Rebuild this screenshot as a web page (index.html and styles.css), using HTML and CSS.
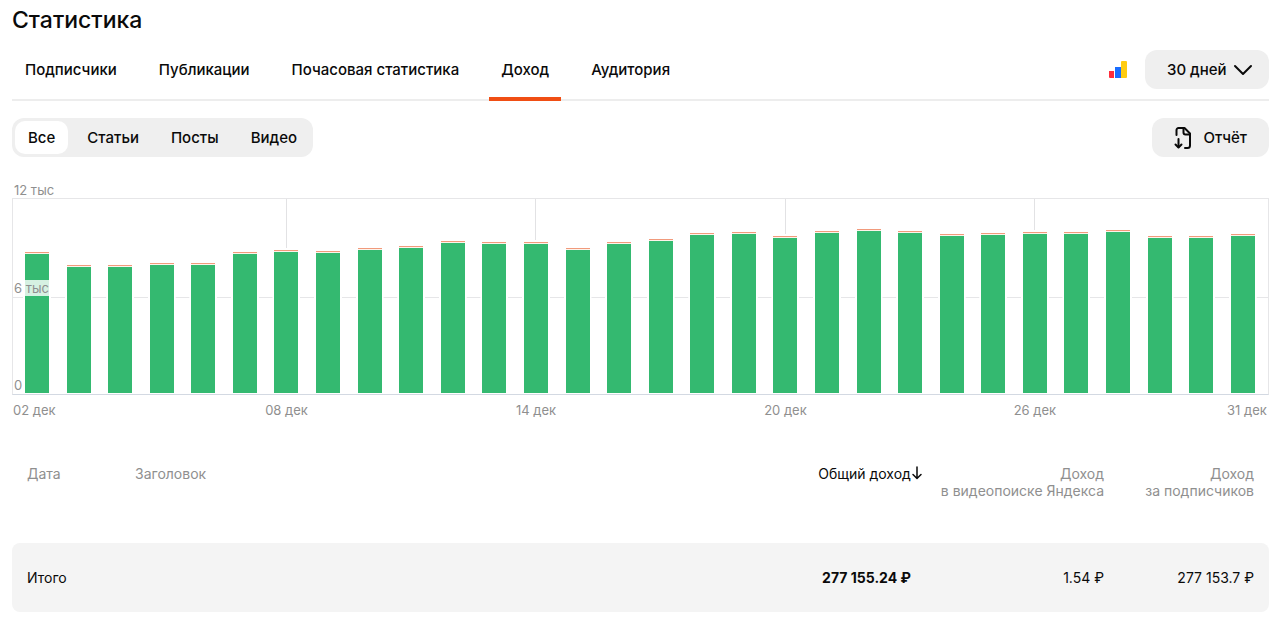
FILE: index.html
```html
<!DOCTYPE html>
<html lang="ru">
<head>
<meta charset="utf-8">
<meta name="viewport" content="width=device-width, initial-scale=1">
<title>Статистика</title>
<link rel="stylesheet" href="styles.css">
</head>
<body>
<main class="page">
  <h1 class="title">Статистика</h1>

  <div class="topbar">
    <nav class="tabs" aria-label="Разделы статистики">
      <a class="tab" href="#subscribers">Подписчики</a>
      <a class="tab" href="#publications">Публикации</a>
      <a class="tab" href="#hourly">Почасовая статистика</a>
      <a class="tab tab-active" href="#income" aria-current="page">Доход</a>
      <a class="tab" href="#audience">Аудитория</a>
    </nav>
    <div class="period">
      <a class="metrika" href="#metrika" aria-label="Метрика">
        <svg width="20" height="19" viewBox="0 0 20 19" aria-hidden="true">
          <path fill="#ff2d3c" d="M1 11h5v7H2a1 1 0 0 1-1-1z"/>
          <path fill="#1a6dff" d="M7 7h6v11H7z"/>
          <path fill="#ffcc12" d="M13 2a1 1 0 0 1 1-1h4a1 1 0 0 1 1 1v15a1 1 0 0 1-1 1h-5z"/>
        </svg>
      </a>
      <div class="select-wrap">
        <select class="select" aria-label="Период">
          <option>30 дней</option>
        </select>
        <svg class="chevron" width="20" height="12" viewBox="0 0 20 12" fill="none" stroke="#0a0a0a" stroke-width="2" stroke-linecap="round" stroke-linejoin="round" aria-hidden="true"><path d="M2 2l8 8 8-8"/></svg>
      </div>
    </div>
  </div>

  <div class="toolbar">
    <div class="segments" role="group" aria-label="Тип публикаций">
      <button class="segment segment-active" type="button" aria-pressed="true">Все</button>
      <button class="segment" type="button" aria-pressed="false">Статьи</button>
      <button class="segment" type="button" aria-pressed="false">Посты</button>
      <button class="segment" type="button" aria-pressed="false">Видео</button>
    </div>
    <button class="report" type="button">
      <svg width="18" height="24" viewBox="0 0 18 24" fill="none" stroke="#0a0a0a" stroke-width="2" stroke-linecap="round" stroke-linejoin="round" aria-hidden="true">
        <path d="M2.5 9V4a2 2 0 0 1 2-2h6L16 7.500v12a2.500 2.500 0 0 1-2.500 2.500H11"/>
        <path d="M9.500 2.500v4a2 2 0 0 0 2 2h4"/>
        <path d="M4.500 13v8"/>
        <path d="M1.500 18.500l3 3 3-3"/>
      </svg>
      Отчёт
    </button>
  </div>

  <section class="chart" aria-label="График дохода">
    <div class="chart-max">12 тыс</div>
    <div class="plot">
      <span class="plot-label plot-mid">6 тыс</span>
      <span class="plot-label plot-zero">0</span>
      <div class="slot"><div class="bar" style="height:141px"></div></div>
      <div class="slot"><div class="bar" style="height:128px"></div></div>
      <div class="slot"><div class="bar" style="height:128px"></div></div>
      <div class="slot"><div class="bar" style="height:130px"></div></div>
      <div class="slot"><div class="bar" style="height:130px"></div></div>
      <div class="slot"><div class="bar" style="height:141px"></div></div>
      <div class="slot slot-tick"><div class="bar" style="height:143px"></div></div>
      <div class="slot"><div class="bar" style="height:142px"></div></div>
      <div class="slot"><div class="bar" style="height:145px"></div></div>
      <div class="slot"><div class="bar" style="height:147px"></div></div>
      <div class="slot"><div class="bar" style="height:152px"></div></div>
      <div class="slot"><div class="bar" style="height:151px"></div></div>
      <div class="slot slot-tick"><div class="bar" style="height:151px"></div></div>
      <div class="slot"><div class="bar" style="height:145px"></div></div>
      <div class="slot"><div class="bar" style="height:151px"></div></div>
      <div class="slot"><div class="bar" style="height:154px"></div></div>
      <div class="slot"><div class="bar" style="height:160px"></div></div>
      <div class="slot"><div class="bar" style="height:161px"></div></div>
      <div class="slot slot-tick"><div class="bar" style="height:157px"></div></div>
      <div class="slot"><div class="bar" style="height:162px"></div></div>
      <div class="slot"><div class="bar" style="height:164px"></div></div>
      <div class="slot"><div class="bar" style="height:162px"></div></div>
      <div class="slot"><div class="bar" style="height:159px"></div></div>
      <div class="slot"><div class="bar" style="height:160px"></div></div>
      <div class="slot slot-tick"><div class="bar" style="height:161px"></div></div>
      <div class="slot"><div class="bar" style="height:161px"></div></div>
      <div class="slot"><div class="bar" style="height:163px"></div></div>
      <div class="slot"><div class="bar" style="height:157px"></div></div>
      <div class="slot"><div class="bar" style="height:157px"></div></div>
      <div class="slot"><div class="bar" style="height:159px"></div></div>
    </div>
    <div class="dates">
      <span class="date date-first">02 дек</span>
      <span class="date" style="grid-column:7">08 дек</span>
      <span class="date" style="grid-column:13">14 дек</span>
      <span class="date" style="grid-column:19">20 дек</span>
      <span class="date" style="grid-column:25">26 дек</span>
      <span class="date date-last">31 дек</span>
    </div>
  </section>

  <table class="table">
    <thead>
      <tr>
        <th class="col-date" scope="col">Дата</th>
        <th scope="col">Заголовок</th>
        <th class="num" scope="col" aria-sort="descending">
          <button class="sort" type="button">Общий доход<svg class="sort-arrow" width="12" height="14" viewBox="0 0 12 14" fill="none" stroke="#0a0a0a" stroke-width="1.500" stroke-linecap="round" stroke-linejoin="round" aria-hidden="true"><path d="M6 1v11M2 8.500l4 4 4-4"/></svg></button>
        </th>
        <th class="num col-video" scope="col">Доход<br>в видеопоиске Яндекса</th>
        <th class="num col-subs" scope="col">Доход<br>за подписчиков</th>
      </tr>
    </thead>
    <tbody>
      <tr class="total">
        <td colspan="2">Итого</td>
        <td class="num strong">277 155.24 ₽</td>
        <td class="num">1.54 ₽</td>
        <td class="num">277 153.7 ₽</td>
      </tr>
    </tbody>
  </table>
</main>
</body>
</html>
```
FILE: styles.css
```css
* { box-sizing: border-box; }

body {
  margin: 0;
  background: #fff;
  color: #0a0a0a;
  font-family: Inter, "Liberation Sans", sans-serif;
  font-size: 15px;
}

button, select { font: inherit; color: inherit; border: 0; cursor: pointer; }

.page { padding: 6px 11px 8px 12px; }

.title { margin: 0 0 16px; font-size: 23px; line-height: 28px; font-weight: 500; }

.topbar {
  display: flex;
  justify-content: space-between;
  border-bottom: 2px solid #ededed;
}
.tabs { display: flex; gap: 18px; margin-bottom: -2px; padding-left: 1px; }
.tab {
  display: block;
  padding: 10px 12px 17px;
  border-bottom: 4px solid transparent;
  line-height: 20px;
  font-weight: 500;
  color: inherit;
  text-decoration: none;
}
.tab-active { border-bottom-color: #f04e14; }

.period { display: flex; align-items: center; gap: 17px; margin-bottom: 10px; }
.metrika { display: block; height: 19px; }
.metrika svg { display: block; }
.select-wrap { position: relative; }
.select {
  appearance: none;
  display: block;
  height: 39px;
  padding: 0 42px 0 22px;
  border-radius: 12px;
  background: #efefef;
  font-weight: 500;
}
.chevron { position: absolute; right: 16px; top: 14px; pointer-events: none; }

.toolbar {
  display: flex;
  justify-content: space-between;
  margin-top: 17px;
}
.segments {
  display: flex;
  gap: 6px;
  padding: 3px;
  border-radius: 12px;
  background: #efefef;
}
.segment {
  height: 33px;
  padding: 0 13px;
  border-radius: 10px;
  background: transparent;
  font-weight: 500;
}
.segment-active { background: #fff; }
.report {
  display: flex;
  align-items: center;
  gap: 12px;
  height: 39px;
  padding: 0 22px;
  border-radius: 12px;
  background: #efefef;
  font-weight: 500;
}

.chart { margin-top: 25px; color: #8f8f8f; font-size: 13px; line-height: 16px; }
.chart-max { padding-left: 2px; }
.plot {
  position: relative;
  display: flex;
  justify-content: space-between;
  height: 197px;
  padding: 0 13px 1px 12px;
  border: 1px solid #e6e6e8;
  border-bottom-color: #d3d9e2;
  background: linear-gradient(#e6e6e8, #e6e6e8) 0 98px / 100% 1px no-repeat;
}
.slot { display: flex; align-items: flex-end; width: 24px; }
.slot-tick { background: linear-gradient(#e2e2e4, #e2e2e4) center / 1px 100% no-repeat; }
/* The thin orange cap is the second series stacked over the green one. */
.bar {
  width: 100%;
  border-top: 1px solid #f19a7c;
  background: linear-gradient(#fdf3ea 1px, #34b970 1px);
  box-shadow: 0 0 0 2px #fff;
  clip-path: inset(-2px -2px 0);
}
.plot-label { position: absolute; z-index: 1; left: 0; padding: 0 1px; background: rgba(255, 255, 255, .8); }
.plot-mid { top: 81px; }
.plot-zero { bottom: 1px; }

.dates {
  display: grid;
  grid-template-columns: repeat(30, 24px);
  justify-content: space-between;
  margin-top: 7px;
  padding: 0 14px 0 13px;
}
.date { grid-row: 1; justify-self: center; white-space: nowrap; }
.date-first { grid-column: 1; justify-self: start; margin-left: -12px; }
.date-last { grid-column: 30; justify-self: end; margin-right: -12px; }

.table {
  width: 100%;
  margin-top: 47px;
  border-collapse: collapse;
  font-size: 14px;
  line-height: 17px;
}
.table th {
  height: 78px;
  padding: 0 15px;
  vertical-align: top;
  text-align: left;
  font-weight: 400;
  color: #8f8f8f;
  white-space: nowrap;
}
.table td { height: 69px; padding: 0 15px; background: #f4f4f4; }
.table .num { text-align: right; }
.table .strong { font-weight: 700; }
.col-date { width: 108px; }
.col-video { width: 193px; }
.col-subs { width: 150px; }
.total td:first-child { border-radius: 8px 0 0 8px; }
.total td:last-child { border-radius: 0 8px 8px 0; }
.sort { position: relative; padding: 0; background: none; line-height: 17px; color: #0a0a0a; }
.sort-arrow { position: absolute; left: 100%; top: 1px; }
```
